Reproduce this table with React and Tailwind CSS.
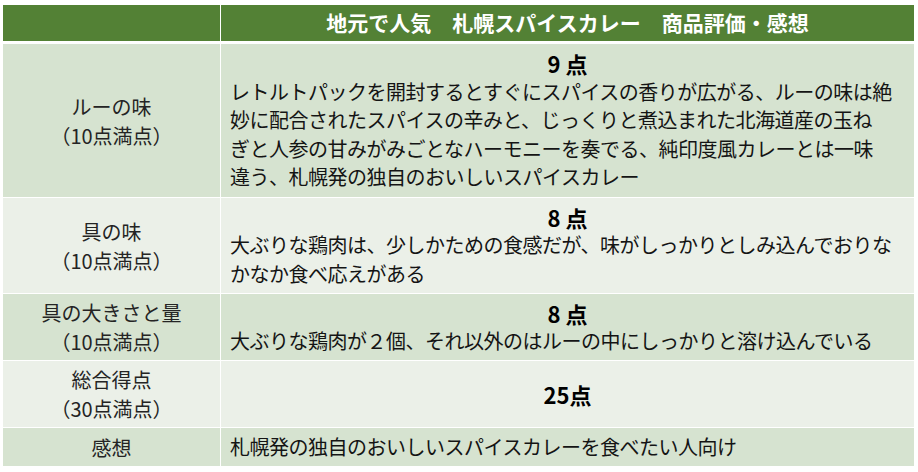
const rows = [
  {
    label: ['ルーの味', '（10点満点）'],
    score: '9 点',
    lines: [
      'レトルトパックを開封するとすぐにスパイスの香りが広がる、ルーの味は絶',
      '妙に配合されたスパイスの辛みと、じっくりと煮込まれた北海道産の玉ね',
      'ぎと人参の甘みがみごとなハーモニーを奏でる、純印度風カレーとは一味',
      '違う、札幌発の独自のおいしいスパイスカレー',
    ],
    height: 'h-[153px]',
    band: 'bg-[#d6e3d0]',
  },
  {
    label: ['具の味', '（10点満点）'],
    score: '8 点',
    lines: [
      '大ぶりな鶏肉は、少しかための食感だが、味がしっかりとしみ込んでおりな',
      'かなか食べ応えがある',
    ],
    height: 'h-[95px]',
    band: 'bg-[#ebf0e8]',
  },
  {
    label: ['具の大きさと量', '（10点満点）'],
    score: '8 点',
    lines: ['大ぶりな鶏肉が２個、それ以外のはルーの中にしっかりと溶け込んでいる'],
    height: 'h-[66px]',
    band: 'bg-[#d6e3d0]',
  },
  {
    label: ['総合得点', '（30点満点）'],
    score: '25点',
    lines: [],
    height: 'h-[66px]',
    band: 'bg-[#ebf0e8]',
  },
  {
    label: ['感想'],
    score: null,
    lines: ['札幌発の独自のおいしいスパイスカレーを食べたい人向け'],
    height: 'h-[38px]',
    band: 'bg-[#d6e3d0]',
  },
];

export default function App() {
  return (
    <div
      className="min-h-screen bg-white pt-[5px] pl-[3px]"
      style={{ fontFamily: '"Noto Sans CJK JP", "Noto Sans", sans-serif' }}
    >
      <div className="w-[911px] flex flex-col gap-px bg-white text-[#141414]">
        {/* header */}
        <div className="flex h-[36px] gap-px mb-[2px]">
          <div className="w-[217px] bg-[#538135]" />
          <div className="flex-1 bg-[#538135] flex items-center justify-center text-white font-bold text-[21px] whitespace-nowrap">
            地元で人気　札幌スパイスカレー　商品評価・感想
          </div>
        </div>

        {rows.map((row, i) => (
          <div key={i} className={`flex gap-px ${row.height}`}>
            <div
              className={`w-[217px] ${row.band} flex flex-col items-center justify-center text-[20px] leading-[29px] text-[#242424]`}
            >
              {row.label.map((l, j) => (
                <div key={j} className="whitespace-nowrap">{l}</div>
              ))}
            </div>
            <div
              className={`flex-1 ${row.band} flex flex-col justify-center pl-[9px] text-[20px] leading-[28.5px] tracking-[-0.5px]`}
            >
              {row.score && (
                <div className="text-center font-bold text-[22px] text-black pr-[9px] tracking-normal">{row.score}</div>
              )}
              {row.lines.map((l, j) => (
                <div key={j} className="whitespace-nowrap">{l}</div>
              ))}
            </div>
          </div>
        ))}
      </div>
    </div>
  );
}
